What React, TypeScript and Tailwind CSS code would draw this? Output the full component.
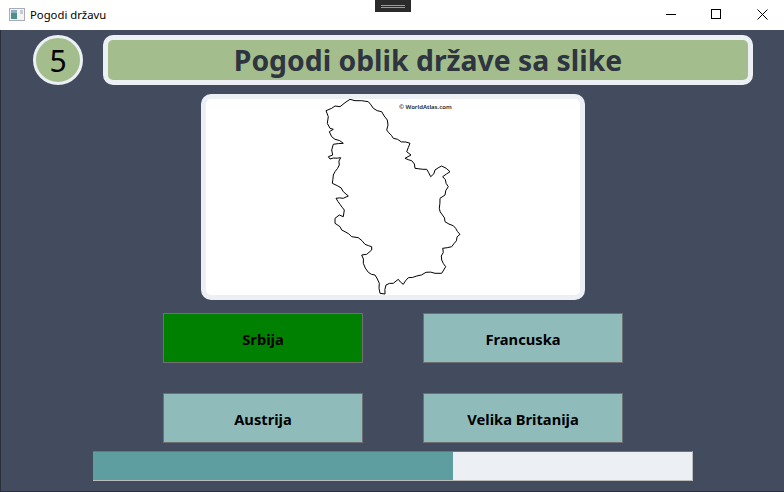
const answers = [
  { name: 'Srbija', correct: true },
  { name: 'Francuska', correct: false },
  { name: 'Austrija', correct: false },
  { name: 'Velika Britanija', correct: false },
]

// outline traced from the picture, in window pixels
const outline: [number, number][] = [
  [350, 99.3], [345, 102.7], [340, 106.7], [335, 106], [331.7, 108.3], [326, 110.7], [328.3, 116.7], [327.3, 123.3],
  [330, 128.3], [333.3, 129.3], [329.3, 131.7], [331.7, 136.7], [335, 139.3], [343.3, 143.3], [333.3, 144.3], [331.7, 150],
  [332.7, 155], [328.3, 156.7], [330, 159], [340.7, 157.7], [339.3, 165], [333.3, 175], [332.3, 183.3], [337.3, 185.7],
  [343.3, 191.7], [348.3, 196], [343.3, 198.3], [336, 198.3], [340, 204.3], [344.3, 210], [343.3, 216.7], [339.3, 215],
  [335, 218.3], [335, 223.3], [340, 226.7], [345, 231.7], [351.7, 236.7], [358.3, 237.7], [365, 244.3], [371.7, 246.7],
  [371.7, 250], [366.7, 254.3], [361.7, 255], [363.3, 263.3], [368.3, 272.3], [375, 275], [379.3, 283.3], [380, 293.3],
  [385, 294], [386, 285], [393.3, 283.3], [398.3, 279.3], [403.3, 284.3], [408.3, 277.7], [416.7, 276], [426, 272.3],
  [435, 273.3], [441.7, 273.3], [445.7, 266.7], [441.7, 260], [442.7, 248.3], [451.7, 246.7], [460, 234.3], [453.3, 225.7],
  [445, 221.7], [439.3, 208.3], [440, 198.3], [445, 195], [448.3, 186.7], [442.7, 176.7], [450, 171.7], [441.7, 166],
  [435, 170], [430.7, 176.7], [426.7, 169.3], [415, 168.3], [411.7, 160.7], [405, 158.3], [411, 155], [406.7, 151.7],
  [410, 143.3], [393.3, 138.3], [386.7, 130], [387.3, 120], [381.7, 111.7], [373.3, 108.3], [368.3, 101.7], [361.7, 100.7],
  [355, 100.7], [350, 99.3],
]

// the border in the picture is rough, so break long segments up and shake them a little
function roughPath(points: [number, number][]) {
  const out: string[] = []
  let n = 0
  points.forEach(([x, y], i) => {
    const next = points[i + 1]
    out.push(`${x} ${y}`)
    if (!next) return
    const len = Math.hypot(next[0] - x, next[1] - y)
    const steps = Math.floor(len / 3.5)
    for (let s = 1; s < steps; s++) {
      n++
      const t = s / steps
      const w = Math.sin(n * 2.3) * 0.7 + Math.sin(n * 0.9) * 0.5
      out.push(`${(x + (next[0] - x) * t + w * (next[1] - y) / len).toFixed(1)} ${(y + (next[1] - y) * t - w * (next[0] - x) / len).toFixed(1)}`)
    }
  })
  return 'M' + out.join('L') + 'Z'
}

const outlinePath = roughPath(outline)

export default function App() {
  return (
    <div className="w-[784px] h-[492px] flex flex-col overflow-hidden font-['Noto_Sans',sans-serif]">

      {/* Title bar */}
      <div className="h-[30px] shrink-0 bg-white flex items-start relative">
        <svg className="mt-[8px] ml-[9px]" width="16" height="13" viewBox="0 0 16 13">
          <rect x="0.5" y="0.5" width="15" height="12" fill="#f2f4f6" stroke="#a9adb3" />
          <rect x="2" y="2" width="6" height="9" fill="#4f8f8a" />
          <rect x="2" y="2" width="6" height="3" fill="#8fb0c4" />
          <rect x="11" y="2" width="3" height="4" fill="#c5ccd4" />
        </svg>
        <span className="ml-[5px] mt-[6px] text-[11.3px] leading-[18px] text-black">Pogodi državu</span>
        <div className="absolute left-[375px] top-0 w-[36px] h-[12px] bg-[#2b2b2b] flex flex-col items-center justify-center gap-[1px]">
          <div className="w-[24px] h-px bg-[#9a9a9a]" />
          <div className="w-[24px] h-px bg-[#9a9a9a]" />
        </div>
        <div className="ml-auto flex items-center h-[28px]">
          <svg className="mr-[35px]" width="10" height="10" viewBox="0 0 10 10">
            <path d="M0 5.5H10" stroke="#000" />
          </svg>
          <svg className="mr-[36px]" width="10" height="10" viewBox="0 0 10 10">
            <rect x="0.5" y="0.5" width="9" height="9" fill="none" stroke="#000" />
          </svg>
          <svg className="mr-[16px]" width="11" height="11" viewBox="0 0 11 11">
            <path d="M0.5 0.5L10.5 10.5M10.5 0.5L0.5 10.5" stroke="#000" fill="none" />
          </svg>
        </div>
      </div>

      {/* Content */}
      <div className="flex-1 bg-[#434c5e] border-l border-b border-[#2a2f3a] flex flex-col">
        <div className="flex items-center gap-[20px] pl-[32px] pt-[5px]">
          <div className="w-[50px] h-[50px] rounded-full border-[3px] border-[#eceff4] bg-[#a3be8c] flex items-center justify-center text-[30px] text-black">
            5
          </div>
          <div className="w-[650px] h-[50px] rounded-[10px] border-[5px] border-[#eceff4] bg-[#a3be8c] flex items-center justify-center">
            <span className="text-[28.35px] leading-[38px] font-bold text-[#2e3440] -mt-[1px]">Pogodi oblik države sa slike</span>
          </div>
        </div>

        {/* Picture */}
        <div className="ml-[200px] mt-[9px] w-[384px] h-[206px] rounded-[10px] border-[5px] border-[#eceff4] bg-white relative">
          <svg width="374" height="196" viewBox="206 99 374 196" className="block">
            <path d={outlinePath} fill="none" stroke="#000" strokeWidth="1" />
          </svg>
          <span className="absolute left-[193px] top-[2px] text-[6px] leading-[12px] font-semibold text-[#222] whitespace-nowrap">
            © WorldAtlas.com
          </span>
        </div>

        {/* Answers */}
        <div className="ml-[162px] mt-[13px] grid grid-cols-[200px_200px] auto-rows-[50px] gap-x-[60px] gap-y-[30px]">
          {answers.map(a => (
            <button
              key={a.name}
              className={`border border-[#707070] pt-[2px] text-[14.7px] font-bold text-black flex items-center justify-center ${a.correct ? 'bg-[#008000]' : 'bg-[#8fbcbb]'}`}
            >
              {a.name}
            </button>
          ))}
        </div>

        {/* Progress */}
        <div className="ml-[92px] mt-[8px] w-[600px] h-[30px] bg-[#eceff4] border-t border-t-[#6b7280] border-r border-b border-r-[#bcbcbc] border-b-[#bcbcbc]">
          <div className="h-full w-[360px] bg-[#5f9ea0]" />
        </div>
      </div>
    </div>
  )
}
